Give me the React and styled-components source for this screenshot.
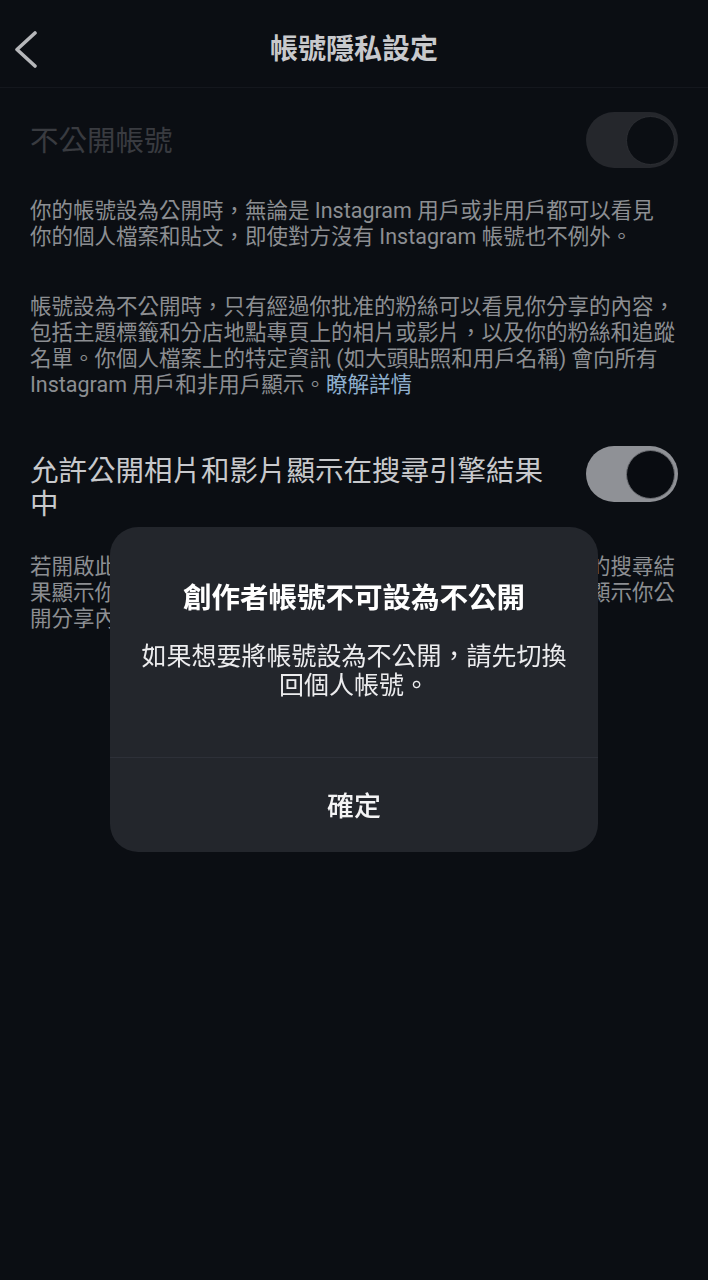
import React from "react";
import styled, { createGlobalStyle } from "styled-components";

const GlobalStyle = createGlobalStyle`
  html, body {
    margin: 0;
    padding: 0;
    background-color: #0b0e13;
  }
  body {
    font-family: Roboto, "Noto Sans CJK TC", "Noto Sans CJK SC", sans-serif;
  }
`;

const PrivacySettings = () => {
  return (
    <Page>
      <GlobalStyle />
      <Header>
        <BackButton aria-label="返回">
          <svg width="26" height="38" viewBox="0 0 26 38">
            <polyline
              points="21,3 3,19.5 21,36"
              fill="none"
              stroke="#b6b7ba"
              strokeWidth="3.6"
              strokeLinecap="round"
              strokeLinejoin="round"
            />
          </svg>
        </BackButton>
        <HeaderTitle>帳號隱私設定</HeaderTitle>
      </Header>

      <Content>
        <SettingRow $top={24}>
          <SettingLabel $disabled>不公開帳號</SettingLabel>
          <Toggle $variant="disabled">
            <Knob $variant="disabled" />
          </Toggle>
        </SettingRow>

        <Description $top={30}>
          你的帳號設為公開時，無論是 Instagram 用戶或非用戶都可以看見
          <br />
          你的個人檔案和貼文，即使對方沒有 Instagram 帳號也不例外。
        </Description>

        <Description $top={44}>
          帳號設為不公開時，只有經過你批准的粉絲可以看見你分享的內容，
          <br />
          包括主題標籤和分店地點專頁上的相片或影片，以及你的粉絲和追蹤
          <br />
          名單。你個人檔案上的特定資訊 (如大頭貼照和用戶名稱) 會向所有
          <br />
          Instagram 用戶和非用戶顯示。<Link>瞭解詳情</Link>
        </Description>

        <SettingRow $top={48} $alignTop>
          <SettingLabel $wrap>允許公開相片和影片顯示在搜尋引擎結果中</SettingLabel>
          <Toggle $variant="on">
            <Knob $variant="on" />
          </Toggle>
        </SettingRow>

        <Description $top={33}>
          若開啟此設定，谷歌等外部搜尋引擎就可以在其網站頁面中的搜尋結
          <br />
          果顯示你的公開相片和影片。若關閉此設定，搜尋引擎不會顯示你公
          <br />
          開分享內容。
        </Description>
      </Content>

      <Overlay>
        <Dialog role="alertdialog">
          <DialogBody>
            <DialogTitle>創作者帳號不可設為不公開</DialogTitle>
            <DialogMessage>
              如果想要將帳號設為不公開，請先切換回個人帳號。
            </DialogMessage>
          </DialogBody>
          <DialogButton>確定</DialogButton>
        </Dialog>
      </Overlay>
    </Page>
  );
};

const Page = styled.div`
  min-height: 1280px;
  background-color: #0b0e13;
  color: #8d8f93;
`;

const Header = styled.header`
  position: relative;
  height: 88px;
  display: flex;
  align-items: flex-start;
  justify-content: center;
  padding-top: 33px;
  border-bottom: 1px solid #14171d;
  box-sizing: border-box;
`;

const BackButton = styled.button`
  position: absolute;
  left: 14px;
  top: 30px;
  padding: 0;
  background: none;
  border: none;
  display: flex;
`;

const HeaderTitle = styled.h1`
  margin: 0;
  font-size: 28px;
  line-height: 34px;
  font-weight: 700;
  color: #c8c9cc;
`;

const Content = styled.main`
  padding: 0 30px;
  display: flex;
  flex-direction: column;
`;

const SettingRow = styled.div`
  display: flex;
  align-items: ${({ $alignTop }) => ($alignTop ? "flex-start" : "center")};
  justify-content: space-between;
  gap: 30px;
  margin-top: ${({ $top }) => $top}px;
`;

const SettingLabel = styled.div`
  flex: 1;
  font-size: 28.5px;
  line-height: 33px;
  padding-top: ${({ $wrap }) => ($wrap ? "9px" : "2px")};
  color: ${({ $disabled }) => ($disabled ? "#393b40" : "#c8c9cc")};
`;

const Toggle = styled.div`
  flex: none;
  width: 92px;
  height: 56px;
  border-radius: 28px;
  box-sizing: border-box;
  display: flex;
  align-items: center;
  justify-content: flex-end;
  padding-right: 3px;
  background-color: ${({ $variant }) =>
    $variant === "on" ? "#8f9196" : "#25272c"};
`;

const Knob = styled.div`
  width: 49px;
  height: 49px;
  border-radius: 50%;
  box-sizing: border-box;
  background-color: ${({ $variant }) =>
    $variant === "on" ? "#090c11" : "#0b0e13"};
  border: 1px solid
    ${({ $variant }) => ($variant === "on" ? "#6f7176" : "#2c2e33")};
`;

const Description = styled.p`
  margin: ${({ $top }) => $top}px 0 0;
  font-size: 21.5px;
  line-height: 26px;
  color: #8c8e92;
  white-space: nowrap;
`;

const Link = styled.span`
  color: #8eafcd;
`;

const Overlay = styled.div`
  position: fixed;
  inset: 0;
  display: flex;
  justify-content: center;
  align-items: flex-start;
  padding-top: 527px;
  box-sizing: border-box;
`;

const Dialog = styled.div`
  width: 488px;
  border-radius: 28px;
  background-color: #23262c;
  overflow: hidden;
  display: flex;
  flex-direction: column;
`;

const DialogBody = styled.div`
  height: 231px;
  box-sizing: border-box;
  padding: 55px 28px 0;
  text-align: center;
  border-bottom: 1px solid #2d3038;
`;

const DialogTitle = styled.h2`
  margin: 0;
  font-size: 28.5px;
  line-height: 34px;
  font-weight: 700;
  color: #ffffff;
`;

const DialogMessage = styled.p`
  margin: 26px 0 0;
  font-size: 25px;
  line-height: 29px;
  color: #ececee;
`;

const DialogButton = styled.button`
  height: 94px;
  border: none;
  background: none;
  padding: 0 0 2px;
  font-family: inherit;
  font-size: 27px;
  font-weight: 500;
  color: #f4f4f5;
`;

export default PrivacySettings;
